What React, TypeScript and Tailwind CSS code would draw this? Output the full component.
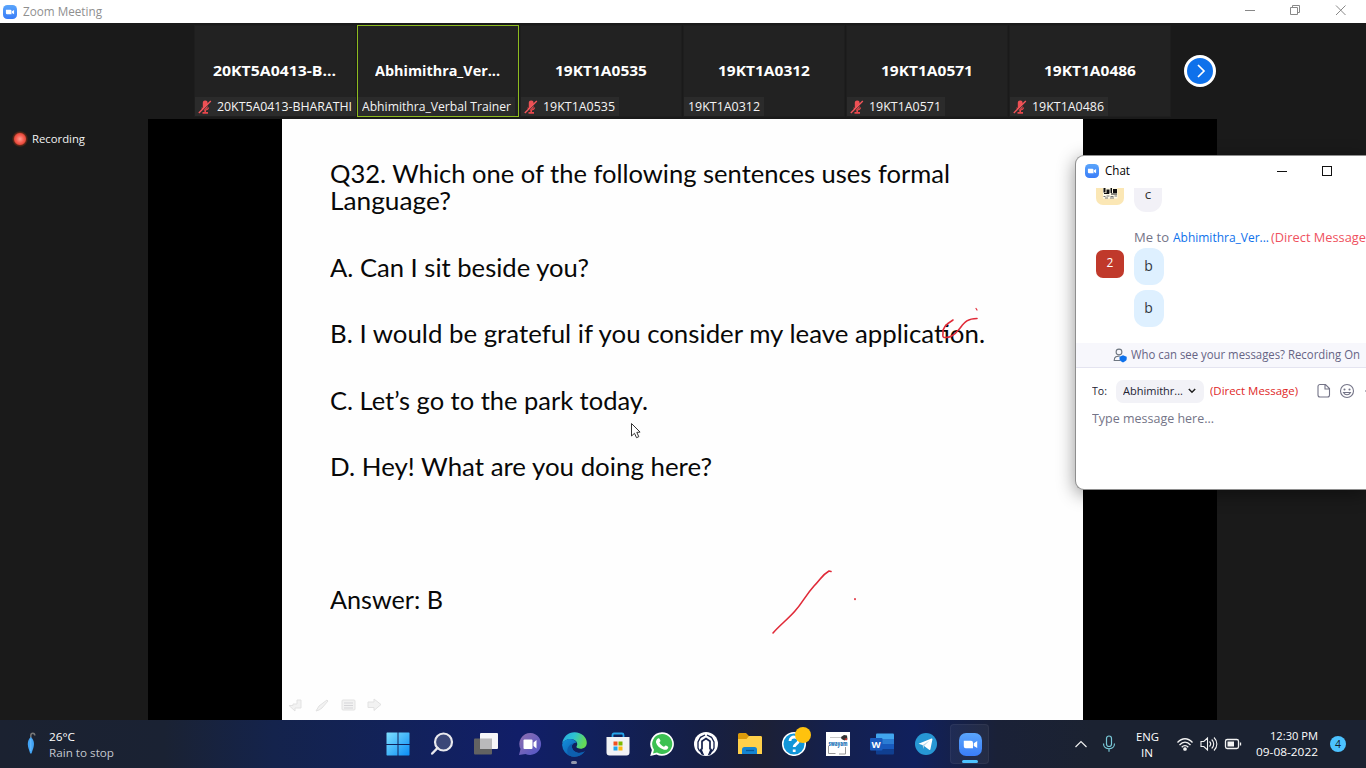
import React, { useLayoutEffect, useRef } from 'react';

/** Single line of text condensed or widened to fill a given width. */
function Fit({ w, className = '', children }: { w: number; className?: string; children: React.ReactNode }) {
  const ref = useRef<HTMLSpanElement>(null);
  useLayoutEffect(() => {
    const el = ref.current;
    if (!el) return;
    el.style.transform = 'none';
    const natural = el.getBoundingClientRect().width;
    if (natural > 0) el.style.transform = `scaleX(${w / natural})`;
  }, [w]);
  return (
    <span className={`block shrink-0 whitespace-nowrap ${className}`} style={{ width: w }}>
      <span ref={ref} className="inline-block origin-left">{children}</span>
    </span>
  );
}

function ZoomLogo({ size }: { size: number }) {
  return (
    <svg width={size} height={size} viewBox="0 0 24 24" className="shrink-0">
      <defs>
        <linearGradient id="zoomBlue" x1="0" y1="0" x2="0" y2="1">
          <stop offset="0" stopColor="#5aa5fb" />
          <stop offset="1" stopColor="#3a7df8" />
        </linearGradient>
      </defs>
      <rect width="24" height="24" rx="7.5" fill="url(#zoomBlue)" />
      <path d="M5 8.2h7.6a2 2 0 0 1 2 2v5.6H7a2 2 0 0 1-2-2zM15.4 10.6 19 8.4v7.3l-3.6-2.2z" fill="#fff" />
    </svg>
  );
}

function MutedMic() {
  return (
    <svg width="14" height="14" viewBox="0 0 14 14" className="shrink-0">
      <rect x="4.8" y="0.6" width="4.800" height="8.4" rx="2.2" fill="#ee5054" />
      <path d="M4 7.500c.5 3.200 6 3.200 6.500 0" stroke="#e8474c" strokeWidth="1.300" fill="none" />
      <path d="M7.200 10v2.500M4.500 12.900h5.500" stroke="#e8474c" strokeWidth="1.600" fill="none" />
      <path d="M2 12.900 13 1.900" stroke="#2b2b2b" strokeWidth="1.100" />
      <path d="M.8 12.900 12.800.9" stroke="#f4565b" strokeWidth="1.400" />
    </svg>
  );
}

type Person = { title: string; tw: number; label: string; lw: number; muted: boolean; active?: boolean };
const people: Person[] = [
  { title: '20KT5A0413-B...', tw: 123, label: '20KT5A0413-BHARATHI', lw: 135, muted: true },
  { title: 'Abhimithra_Ver...', tw: 125, label: 'Abhimithra_Verbal Trainer', lw: 149, muted: false, active: true },
  { title: '19KT1A0535', tw: 92, label: '19KT1A0535', lw: 72, muted: true },
  { title: '19KT1A0312', tw: 92, label: '19KT1A0312', lw: 72, muted: false },
  { title: '19KT1A0571', tw: 92, label: '19KT1A0571', lw: 72, muted: true },
  { title: '19KT1A0486', tw: 92, label: '19KT1A0486', lw: 72, muted: true },
];

function Tile({ p }: { p: Person }) {
  return (
    <div className={`flex h-[92px] w-[162px] shrink-0 flex-col border bg-[#222222] ${p.active ? 'border-[#8dbb1f]' : 'border-[#1e1e1e]'}`}>
      <div className="flex h-[71px] items-end justify-center pr-px pb-[17px]">
        <Fit w={p.tw} className="text-[15px] leading-[20px] font-bold text-white">{p.title}</Fit>
      </div>
      <div className="flex">
        <div className={`flex h-[19px] items-center gap-[5px] bg-[#2b2b2b] pr-1 ${p.muted ? 'pl-[3px]' : 'pl-[4px]'}`}>
          {p.muted && <MutedMic />}
          <Fit w={p.lw} className="text-[12px] leading-[18px] text-[#f4f4f4]">{p.label}</Fit>
        </div>
      </div>
    </div>
  );
}

type Line = { text: string; w: number; gap: string };
const lines: Line[] = [
  { text: 'Q32. Which one of the following sentences uses formal', w: 620, gap: '' },
  { text: 'Language?', w: 121, gap: '' },
  { text: 'A. Can I sit beside you?', w: 259, gap: 'mt-[40px]' },
  { text: 'B. I would be grateful if you consider my leave application.', w: 655, gap: 'mt-[39px]' },
  { text: 'C. Let’s go to the park today.', w: 318, gap: 'mt-[40px]' },
  { text: 'D. Hey! What are you doing here?', w: 382, gap: 'mt-[39px]' },
  { text: 'Answer: B', w: 113, gap: 'mt-[106px]' },
];

function Slide() {
  return (
    <div className="relative h-full w-[801px] bg-[#fefefe] pt-[41px] pl-[48px]">
      {lines.map((l) => (
        <div key={l.text} className={l.gap}>
          <Fit w={l.w} className="font-['Lato',sans-serif] text-[25.500px] leading-[27px] text-[#080808]">{l.text}</Fit>
        </div>
      ))}
      <svg className="absolute top-0 left-0" width="801" height="601" viewBox="282 119 801 601" fill="none">
        <g stroke="#e02a38" strokeWidth="1.6" strokeLinecap="round" strokeLinejoin="round">
          <path d="M953 320c-5 3-11 8-10 13 0 3-1 4 1 4.500 5 .5 10-2 14-7 6-7 8-12 19-12" />
          <path d="M976 308.500l1 1.500" strokeWidth="1.200" />
          <path d="M773 633c7-8 15-14 22-22 8-9 10-15 19-25 7-7 8-11 15-15l2 .5" />
          <path d="M855 599v.3" strokeWidth="1.800" />
        </g>
        <path d="M631.500 423.500v12.500l3-2.700 2 4.400 2.300-1-2-4.300 3.300-.3z" fill="#fff" stroke="#333" strokeWidth="1" />
        <g fill="#f2f2f2" stroke="#e2e2e2" strokeWidth="1">
          <path d="M301 700v8h-6v3l-6-5.500h4V704h4v-4z" />
          <path d="M316 711l3-5 8-6 1 1-6 7-3 2z" />
          <rect x="342" y="700" width="13" height="10" rx="1" />
          <path d="M344 703h9M344 705.500h9M344 708h9" stroke="#d5d5d8" />
          <path d="M368 702h6v-3l7 5.500-7 6v-3h-6z" />
        </g>
      </svg>
    </div>
  );
}

function Chat() {
  return (
    <div className="absolute top-[155px] left-[1075px] z-10 flex h-[335px] w-[291px] flex-col overflow-hidden rounded-l-[9px] border-y border-l border-[#8e8e8e] bg-white shadow-[0_4px_18px_rgba(0,0,0,0.42)]">
      <div className="flex h-[31px] shrink-0 items-center pb-[2px] pl-[9px]">
        <ZoomLogo size={14} />
        <Fit w={25} className="ml-[6px] text-[12px] text-black">Chat</Fit>
        <svg className="ml-[147px] shrink-0" width="60" height="14" viewBox="0 0 60 14" fill="none" stroke="#111" strokeWidth="1.100" shapeRendering="crispEdges">
          <path d="M0 7.500h10" />
          <rect x="45.500" y="2.500" width="9" height="9" />
        </svg>
      </div>
      <div className="flex h-[156px] shrink-0 flex-col pt-px">
        <div className="flex items-start pl-[20px]">
          <svg width="28" height="18" viewBox="0 0 28 18">
            <path d="M0 0h28v10a7 7 0 0 1-7 7H7a7 7 0 0 1-7-7z" fill="#fbe7b5" />
            <path d="M7 0h14.500v10.500H7z" fill="#fffbe8" />
            <path d="M7.500 0h2v4.500h-2zM10.500 1.500h3v4h-3zM14.500 0h1.500v5h-1.500zM17 1h4v4h-4zM8 5h5v1H8zM15 5.500h6v1h-6z" fill="#111" />
            <path d="M7.500 8.500h2M10.500 8h3M14.500 8.500h3M18.500 8h2.500M9 10h3M14 10h4" stroke="#777" strokeWidth="1" />
          </svg>
          <div className="ml-[10px] flex h-[24px] w-[28px] justify-center rounded-b-[12px] bg-[#f2f1f7] text-[13.500px] leading-[12px] text-[#333]">c</div>
        </div>
        <div className="mt-[17px] flex pl-[58px] text-[12.500px] leading-[18px]">
          <Fit w={35} className="text-[#747487]">Me to</Fit>
          <Fit w={96} className="ml-[4px] text-[#0e71eb]">Abhimithra_Ver...</Fit>
          <Fit w={95} className="ml-[2px] text-[#ef5260]">(Direct Message</Fit>
        </div>
        <div className="mt-px flex pl-[20px]">
          <div className="mt-[2px] flex h-[28px] w-[28px] items-center justify-center rounded-[7px] bg-[#c0392b] text-[12px] text-white">
            <span className="-mt-[2px]">2</span>
          </div>
          <div className="ml-[10px] flex flex-col gap-[5px] text-[14px] text-[#333842]">
            <div className="flex h-[37px] w-[30px] items-center justify-center rounded-[12px] bg-[#def0ff] pr-px pb-[2px]">b</div>
            <div className="flex h-[37px] w-[30px] items-center justify-center rounded-[12px] bg-[#def0ff] pr-px pb-[2px]">b</div>
          </div>
        </div>
      </div>
      <div className="flex h-[25px] shrink-0 items-center border-b border-[#e4e4f0] bg-[#f7f7fc] pl-[37px]">
        <svg width="15" height="15" viewBox="0 0 15 15" fill="none" stroke="#6e7680" strokeWidth="1.100">
          <circle cx="6" cy="4" r="2.900" />
          <path d="M7 12.500H1.200c0-4 2.500-4.500 5.500-4.200" />
          <path d="M10 7.200l3.700 1.500v2.300c0 1.800-2 2.700-3.700 3.500-1.700-.8-3.500-1.700-3.500-3.500V8.700z" fill="#0e71eb" stroke="none" />
        </svg>
        <Fit w={229} className="ml-[3px] text-[12px] text-[#666484]">Who can see your messages? Recording On</Fit>
      </div>
      <div className="mt-[11px] flex h-[24px] shrink-0 items-center pl-[16px] text-[11.500px] text-[#232333]">
        <Fit w={15}>To:</Fit>
        <div className="ml-[9px] flex h-[23px] w-[88px] shrink-0 items-center rounded-[7px] bg-[#f2f2f7] pl-[7px]">
          <Fit w={60}>Abhimithr...</Fit>
          <svg className="ml-[5px]" width="8" height="6" viewBox="0 0 8 6" fill="none" stroke="#222" strokeWidth="1.500"><path d="M.8 1 4 4.200 7.200 1" /></svg>
        </div>
        <Fit w={88} className="ml-[6px] text-[#e02828]">(Direct Message)</Fit>
        <svg className="ml-[19px] shrink-0" width="60" height="16" viewBox="0 0 60 16" fill="none" stroke="#747487" strokeWidth="1.100">
          <path d="M3 1.500h5.500l4 4V12a2 2 0 0 1-2 2H3a2 2 0 0 1-2-2V3.500a2 2 0 0 1 2-2zM8 1.500V6h4.500" />
          <circle cx="30" cy="8" r="6.500" />
          <circle cx="27.500" cy="6.500" r=".5" fill="#747487" />
          <circle cx="32.500" cy="6.500" r=".5" fill="#747487" />
          <path d="M26.500 9.500c1.500 3 5.500 3 7 0zM48 8h3" />
        </svg>
      </div>
      <div className="mt-[7px] pl-[16px]">
        <Fit w={122} className="text-[12.500px] leading-[18px] text-[#747487]">Type message here...</Fit>
      </div>
    </div>
  );
}

const dockIcons: React.ReactNode[] = [
  <svg key="win" width="24" height="24" viewBox="0 0 24 24">
    <defs><linearGradient id="win" x1="0" y1="0" x2="1" y2="1"><stop stopColor="#7fe0ff" /><stop offset="1" stopColor="#0a8df5" /></linearGradient></defs>
    <path d="M1 .5h10.500V12H.5V1zM12.500.5H23l.5.5v11h-11zM.5 13h11v10.500H1L.5 23zM12.500 13h11v10l-.5.5H12.500z" fill="url(#win)" />
  </svg>,
  <svg key="search" width="24" height="24" viewBox="0 0 24 24">
    <circle cx="13.500" cy="10" r="8.500" fill="#3b4778" stroke="#e9e9ee" strokeWidth="2.200" />
    <path d="m7.500 16-5.300 5.500" stroke="#e9e9ee" strokeWidth="2.500" strokeLinecap="round" />
  </svg>,
  <svg key="task" width="24" height="24" viewBox="0 0 24 24">
    <rect x="0" y="6.500" width="18" height="16" rx="1" fill="#626262" />
    <rect x="6" y="1" width="18" height="16" rx="1" fill="#f6f6f8" />
    <path d="M6 6.500h12V17H6z" fill="#b9b9bb" />
  </svg>,
  <svg key="teams" width="24" height="24" viewBox="0 0 24 24">
    <defs><linearGradient id="tm" x1="0" y1="0" x2="1" y2="1"><stop stopColor="#8f6fae" /><stop offset="1" stopColor="#5055c9" /></linearGradient></defs>
    <path d="M12.500 1a11 11 0 1 1-5 21L1 23l1.500-6A11 11 0 0 1 12.500 1z" fill="url(#tm)" />
    <rect x="5.500" y="7.500" width="9" height="9.500" rx="1" fill="#fff" />
    <path d="m15.500 10.500 3-2.500v8.500l-3-2.500z" fill="#fff" />
  </svg>,
  <svg key="edge" width="25" height="25" viewBox="0 0 24 24">
    <defs>
      <linearGradient id="eg" x1="0" y1="0" x2="1" y2=".3"><stop stopColor="#2aa7e0" /><stop offset=".5" stopColor="#2cc3d2" /><stop offset="1" stopColor="#64d957" /></linearGradient>
      <linearGradient id="eb" x1="0" y1="0" x2="1" y2="1"><stop stopColor="#1390dd" /><stop offset="1" stopColor="#0c4d9e" /></linearGradient>
    </defs>
    <path d="M.2 11C1 4.500 6 .2 12 .2c7 0 12 5 11.800 10.300-.1 3.500-2.800 5.500-6 5.500-3.500 0-4.500-1.300-3.600-2.500C16 10.500 12.500 6.500 8 6.800 4 7 1.500 9 .2 11z" fill="url(#eg)" />
    <path d="M.1 12.500C.5 9 4 6.700 8 6.800c3 .1 5.500 1.700 6 3.700-2-.5-4.500 1-4.500 3.500 0 4 4 6.500 8 6 2-.2 3.300-1 4.500-1.500A12 12 0 0 1 .1 12.500z" fill="url(#eb)" />
    <path d="M6 22c-2-4-1-10 6-11.500-2 .7-2.500 2-2.500 3.500 0 4 4 6.500 8 6 2-.2 3.300-1 4.500-1.500-3.500 5-10 7-16 3.500z" fill="#0d5fb0" />
  </svg>,
  <svg key="store" width="24" height="24" viewBox="0 0 24 24">
    <path d="M6.500 6V3a1.500 1.500 0 0 1 1.500-1.500h8A1.500 1.500 0 0 1 17.500 3v3" fill="none" stroke="#26a5ea" strokeWidth="1.800" />
    <path d="M.5 5h23v15.500a3 3 0 0 1-3 3h-17a3 3 0 0 1-3-3z" fill="#f1f2f5" />
    <path d="M7.500 9.500h4v4h-4z" fill="#f15122" /><path d="M12.500 9.500h4v4h-4z" fill="#7eba00" />
    <path d="M7.500 14.500h4v4h-4z" fill="#20a4ea" /><path d="M12.500 14.500h4v4h-4z" fill="#fdb813" />
  </svg>,
  <svg key="wa" width="24" height="24" viewBox="0 0 24 24">
    <path d="M12 .2A11.800 11.800 0 1 1 6.500 22.400L.2 24l1.700-6A11.800 11.800 0 0 1 12 .2z" fill="#fff" />
    <path d="M12 2a10 10 0 1 1-5 18.500l-4 1 1-3.800A10 10 0 0 1 12 2z" fill="#3cc152" />
    <path d="M8 6.500c1-.6 1.600 0 2.500 2.300.2.600-1.300 1.500-1 2 1 1.900 2.400 3 4.300 3.900.6.200 1.200-1.300 1.800-1.300 2.800 1.100 2.900 1.300 2.500 2.600-.6 1.700-2.700 2.200-4.600 1.600-4-1.200-6.600-4-7.500-7C5.700 8.800 7 7 8 6.500z" fill="#fff" />
  </svg>,
  <svg key="arc" width="24" height="24" viewBox="0 0 24 24" fill="none">
    <circle cx="12" cy="12" r="12" fill="#fff" />
    <path d="M11 3 6.500 5.300 4 10v6l1.700 3.200M13 3l4.500 2.300L20 10v6l-1.700 3.200" stroke="#14204b" strokeWidth="1.300" />
    <path d="M8 17.500V9.200L12 6.500l4 2.700v8.300" stroke="#14204b" strokeWidth="1.700" />
    <path d="m7.200 16 3 7.200-2.700-.7-2.300-4zM16.800 16l-3 7.200 2.700-.7 2.300-4z" fill="#14204b" />
  </svg>,
  <svg key="folder" width="24" height="24" viewBox="0 0 24 24">
    <path d="M0 2.500A1.500 1.500 0 0 1 1.500 1H8l3 3h11.500A1.500 1.500 0 0 1 24 5.500V8H0z" fill="#dc9b0b" />
    <path d="M0 7h8.500l2.500-3h11.500A1.500 1.500 0 0 1 24 5.500V22H0z" fill="#ffd04a" />
    <path d="M4 22v-4.500A2.500 2.500 0 0 1 6.500 15h10a2.500 2.500 0 0 1 2.500 2.500V22z" fill="#1484d1" />
    <path d="M8 18.500h8" stroke="#075797" strokeWidth="1.300" />
  </svg>,
  <svg key="help" width="32" height="30" viewBox="0 0 32 30" className="-mt-[6px] ml-[4px]">
    <circle cx="14" cy="18" r="11.300" fill="#1296d8" stroke="#fff" strokeWidth="1.500" />
    <path d="M10 15c0-5.500 8.500-5 8.500-.3 0 3-4.300 3.300-4.300 6.300M14.200 23.500v2.500" stroke="#fff" strokeWidth="2.800" fill="none" />
    <circle cx="23" cy="9" r="8" fill="#ffc20e" />
  </svg>,
  <svg key="mod" width="24" height="24" viewBox="0 0 24 24">
    <rect width="24" height="24" fill="#fff" />
    <path d="M2.500 14v7.500h7M13 22h6.500v-7" fill="none" stroke="#999" />
    <path d="M4 5.500h11" stroke="#c8c8c8" />
    <path d="m15 5 3-2 3 .5.500 4-3 1-3-1.500z" fill="#333" />
    <path d="m18 7 3-1v2.500z" fill="#c33" />
    <text x="12" y="13.500" textAnchor="middle" fontFamily="Open Sans" fontSize="6" fontWeight="800" fill="#1e76b8" textLength="19" lengthAdjust="spacingAndGlyphs">swayam</text>
  </svg>,
  <svg key="word" width="24" height="24" viewBox="0 0 24 24">
    <path d="M6 2.500A1 1 0 0 1 7 1.500h16a1 1 0 0 1 1 1V7H6z" fill="#41a5ee" />
    <path d="M6 7h18v5H6z" fill="#2b7cd3" /><path d="M6 12h18v5H6z" fill="#185abd" />
    <path d="M6 17h18v4.500a1 1 0 0 1-1 1H7a1 1 0 0 1-1-1z" fill="#103f91" />
    <rect x="0" y="6" width="12.500" height="12.500" rx="1" fill="#185abd" />
    <text x="6.200" y="15.700" textAnchor="middle" fontFamily="Open Sans" fontSize="9.500" fontWeight="700" fill="#fff">W</text>
  </svg>,
  <svg key="tg" width="24" height="24" viewBox="0 0 24 24">
    <circle cx="12" cy="12" r="11" fill="#2797d4" />
    <path d="m4.500 11.800 13-5.200c.7-.2 1 .2.900.9l-2 9.800c-.2.700-.7.800-1.300.4l-6-4.500z" fill="#fff" />
    <path d="m8.500 13.200 7-4.600-5.500 5.500-.3 3z" fill="#b5d6ea" />
  </svg>,
  <ZoomLogo key="zoom" size={23} />,
];

function Taskbar() {
  return (
    <div className="flex h-[48px] w-full items-center bg-[linear-gradient(90deg,#1b2231_0%,#1a2233_12%,#14234c_20%,#12225a_29%,#111e68_38%,#11205d_43%,#151f46_51%,#1c2036_56%,#14204e_61%,#10205d_67%,#1a2137_73%,#1b2231_80%,#1b2231_100%)] text-white">
      <div className="flex w-[376px] shrink-0 items-center pl-[24px]">
        <svg width="14" height="26" viewBox="0 0 14 26" fill="none">
          <path d="M6.800 7V4.500c0-3 4-3 4 0" stroke="#777" strokeWidth="1.500" />
          <path d="M6.800 6c3.500 3 3.700 7 2.500 11L7.500 22.500H6.200L4.400 17c-1.100-4-.9-8 2.400-11z" fill="#42a4f5" />
          <path d="M6.800 8v12" stroke="#6bbcff" />
        </svg>
        <div className="ml-[11px] flex flex-col pt-px text-[11.500px] leading-[16px]">
          <Fit w={26}>26°C</Fit>
          <Fit w={65} className="text-[#c4c8cf]">Rain to stop</Fit>
        </div>
      </div>
      <div className="flex w-[616px] shrink-0">
        {dockIcons.map((icon, i) => (
          <div key={i} className="relative flex h-[48px] w-[44px] items-center justify-center">
            {i === 13 && <div className="absolute top-[4px] left-[2px] h-[40px] w-[39px] rounded-[4px] border border-white/5 bg-white/5" />}
            <div className="relative">{icon}</div>
            {i === 4 && <div className="absolute bottom-[4px] h-[3px] w-[6px] rounded-full bg-[#9298ad]" />}
            {i === 13 && <div className="absolute bottom-[5px] h-[3px] w-[16px] rounded-full bg-[#4cc2ff]" />}
          </div>
        ))}
      </div>
      <div className="flex flex-1 items-center pl-[82px] text-[11.500px] leading-[16px]">
        <svg width="14" height="8" viewBox="0 0 14 8" fill="none" stroke="#eee" strokeWidth="1.200"><path d="m1.500 7 5.500-5.500L12.500 7" /></svg>
        <svg className="ml-[14px]" width="14" height="18" viewBox="0 0 14 18" fill="none" stroke="#79c9d8" strokeWidth="1.200">
          <rect x="4.500" y="1" width="5" height="10.500" rx="2.500" />
          <path d="M1.500 8.500c0 7 11 7 11 0M7 13.800v3" />
        </svg>
        <div className="ml-[19px] flex w-[24px] flex-col items-center pt-px">
          <Fit w={23}>ENG</Fit>
          <Fit w={12}>IN</Fit>
        </div>
        <svg className="ml-[17px] shrink-0" width="66" height="16" viewBox="0 0 66 16" fill="none" stroke="#f3f3f3" strokeWidth="1.300">
          <path d="M1.500 6.500c4.500-5 10.500-5 15 0M3.500 9c3.500-3.800 7.500-3.800 11 0M5.700 11.300c2-2.200 4.600-2.200 6.600 0" />
          <circle cx="9" cy="13" r="1.200" fill="#f3f3f3" />
          <path d="M25 5.500h2.800L31.500 2v12l-3.700-3.500H25zM33.500 5.500c1.500 1.500 1.500 3.500 0 5M35.700 3.500c2.700 2.700 2.700 6.300 0 9M38 1.500c3.800 3.800 3.800 9.200 0 13" strokeWidth="1.100" />
          <rect x="49.500" y="3.500" width="13" height="9" rx="1.800" />
          <path d="M51.500 5.500h6.500v5h-6.500z" fill="#f3f3f3" stroke="none" /><path d="M64.500 6.500v3" />
        </svg>
        <div className="ml-[14px] flex w-[62px] flex-col items-end">
          <Fit w={48}>12:30 PM</Fit>
          <Fit w={62}>09-08-2022</Fit>
        </div>
        <div className="ml-[12px] flex h-[16px] w-[16px] items-center justify-center rounded-full bg-[#4cc2ff] text-[10.500px] text-[#12202c]">4</div>
      </div>
    </div>
  );
}

export default function App() {
  return (
    <div className="relative flex h-[768px] w-[1366px] flex-col overflow-hidden bg-[#1a1a1a] font-['Open_Sans','Noto_Sans',sans-serif]">
      <div className="flex h-[23px] shrink-0 items-center bg-white pl-[3px]">
        <ZoomLogo size={14} />
        <Fit w={79} className="ml-[6px] text-[12px] text-[#8f8f8f]">Zoom Meeting</Fit>
        <svg className="-mt-[3px] ml-[1142px] shrink-0" width="104" height="12" viewBox="0 0 104 12" fill="none" stroke="#888" strokeWidth="1">
          <path d="M1 6.500h10" />
          <path d="M46.500 3.500h7v7h-7zM48.500 3.500v-2h7v7h-2" />
          <path d="m92 1.500 9.500 9.500M101.500 1.500 92 11" />
        </svg>
      </div>
      <div className="flex h-[96px] shrink-0 items-start pt-[2px] pl-[194px]">
        <div className="flex gap-px">
          {people.map((p) => <Tile key={p.title} p={p} />)}
        </div>
        <div className="mt-[30px] ml-[13px] flex h-[32px] w-[32px] items-center justify-center rounded-full border-[3px] border-white bg-[#0e71eb]">
          <svg className="ml-[2px]" width="10" height="14" viewBox="0 0 10 14" fill="none" stroke="#fff" strokeWidth="1.700"><path d="m2 1 6 6-6 6" /></svg>
        </div>
      </div>
      <div className="flex h-[601px] shrink-0">
        <div className="w-[148px] shrink-0 pt-[11px] pl-[12px]">
          <div className="flex items-center">
            <div className="h-[16px] w-[16px] rounded-full bg-[radial-gradient(circle,#ff9c91_0,#f45a4d_35%,#e64b3d_48%,#5b2616_58%,#1a1a1a_75%)]" />
            <Fit w={53} className="ml-[4px] text-[11.500px] leading-[18px] text-[#f2f2f2]">Recording</Fit>
          </div>
        </div>
        <div className="flex w-[1069px] shrink-0 justify-center bg-black">
          <Slide />
        </div>
      </div>
      <Taskbar />
      <Chat />
    </div>
  );
}
